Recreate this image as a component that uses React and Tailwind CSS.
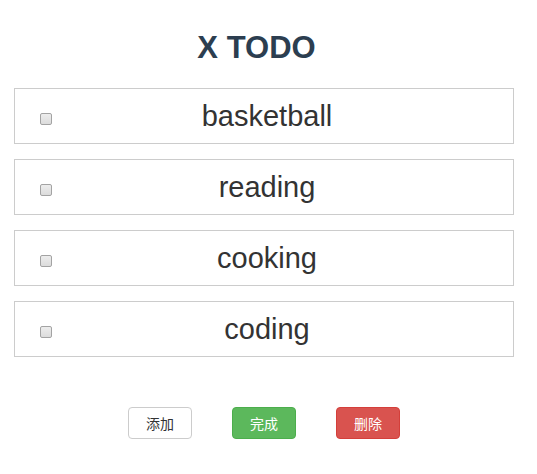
const todos = ["basketball", "reading", "cooking", "coding"];

function Check() {
  return (
    <span className="mt-[6px] ml-[25px] block w-[12px] h-[12px] rounded-[2px] border border-[#a3a3a3] bg-gradient-to-b from-[#ededed] to-[#dcdcdc]" />
  );
}

export default function App() {
  return (
    <div className="min-h-screen bg-white font-['Liberation_Sans',Arial,'Noto_Sans_CJK_SC',sans-serif] text-[#333]">
      <h1 className="pt-[28px] pr-[24px] text-center text-[31px] leading-[40px] font-bold text-[#2c3e50]">
        X TODO
      </h1>
      <ul className="mt-[20px] ml-[14px] w-[500px] flex flex-col gap-[15px]">
        {todos.map((t) => (
          <li
            key={t}
            className="h-[56px] border border-[#ccc] grid grid-cols-[1fr_auto_1fr] items-center"
          >
            <div>
              <Check />
            </div>
            <span className="pl-[6px] text-[29px] leading-[32px]">{t}</span>
            <div />
          </li>
        ))}
      </ul>
      <div className="mt-[50px] flex justify-center gap-[40px] ml-[-9px] text-[14px] font-['Noto_Sans_CJK_SC',sans-serif]">
        <button className="w-[64px] h-[32px] rounded-[4px] border border-[#ccc] bg-white text-[#333]">
          添加
        </button>
        <button className="w-[64px] h-[32px] rounded-[4px] border border-[#4cae4c] bg-[#5cb85c] text-white">
          完成
        </button>
        <button className="w-[64px] h-[32px] rounded-[4px] border border-[#d43f3a] bg-[#d9534f] text-white">
          删除
        </button>
      </div>
    </div>
  );
}
